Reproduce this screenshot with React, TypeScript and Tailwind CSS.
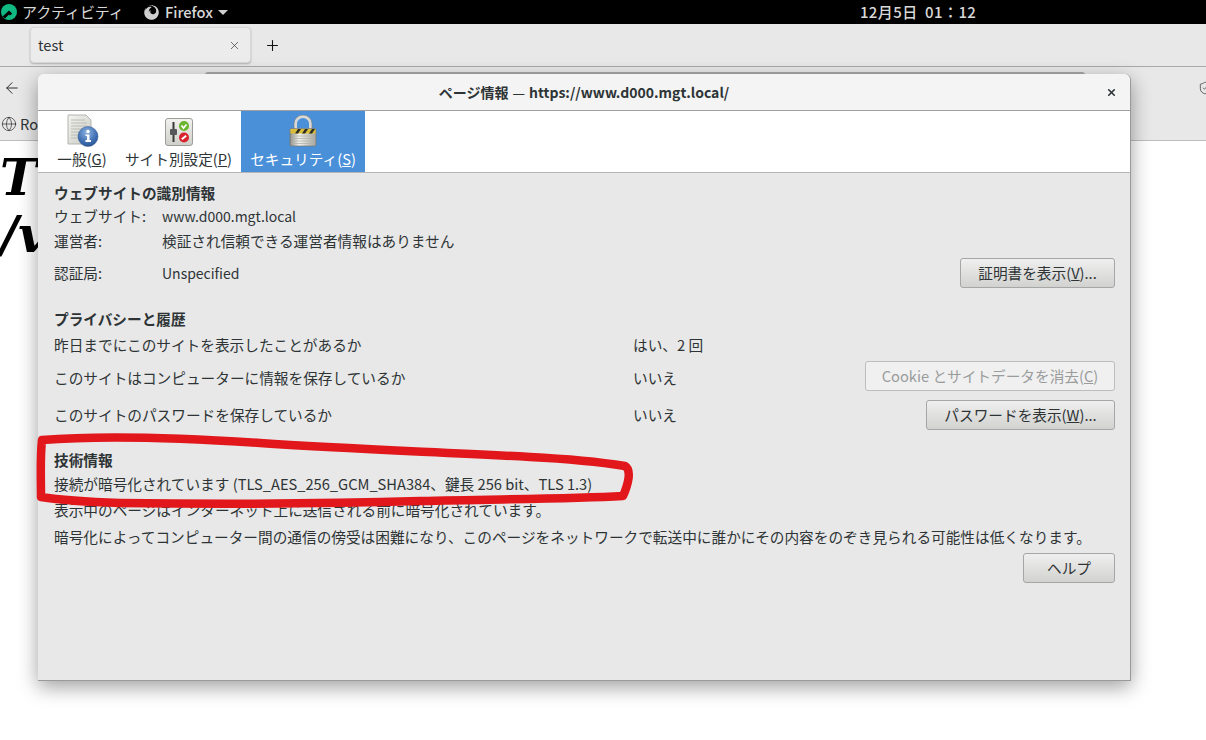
import { ReactNode } from "react";
import { ArrowLeft, Globe, Plus, ShieldCheck, X } from "lucide-react";
import { FaFirefox } from "react-icons/fa";

function RockyLogo() {
  return (
    <svg width="16" height="16" viewBox="0 0 16 16">
      <circle cx="8" cy="8" r="8" fill="#10b981" />
      <path d="M1.5 12.5 8 6.5l3.2 3-2.2 2L8 10.6 4 14.5z" fill="#000" />
    </svg>
  );
}

function InfoIcon() {
  return (
    <svg width="42" height="34" viewBox="0 0 42 34">
      <defs>
        <linearGradient id="page" x1="0" y1="0" x2="1" y2="1">
          <stop offset="0" stopColor="#f4f4f0" />
          <stop offset="1" stopColor="#c9c9c4" />
        </linearGradient>
        <radialGradient id="ball" cx="0.45" cy="0.3" r="0.8">
          <stop offset="0" stopColor="#8fb3e0" />
          <stop offset="0.6" stopColor="#3f6fb3" />
          <stop offset="1" stopColor="#234a86" />
        </radialGradient>
      </defs>
      <path d="M7 2h18l5 5v24H7z" fill="url(#page)" stroke="#b5b5b0" />
      <path d="M10 7h14M10 10h16M10 13h16M10 16h16M10 19h14M10 22h12M10 25h12" stroke="#bcbcb6" strokeWidth="1" />
      <circle cx="27" cy="23.500" r="10" fill="url(#ball)" stroke="#2c5592" strokeWidth="0.5" />
      <circle cx="27" cy="18.500" r="1.700" fill="#fff" />
      <path d="M24.500 21.500H28.500V27H30V29H24.500V27H26V23H24.500z" fill="#fff" />
    </svg>
  );
}

function SiteIcon() {
  return (
    <svg width="30" height="30" viewBox="0 0 30 30">
      <defs>
        <linearGradient id="panel" x1="0" y1="0" x2="0" y2="1">
          <stop offset="0" stopColor="#f2f2ee" />
          <stop offset="1" stopColor="#cfcfca" />
        </linearGradient>
      </defs>
      <rect x="1.500" y="1.500" width="27" height="27" rx="2.500" fill="url(#panel)" stroke="#9c9c98" />
      <rect x="8.500" y="5" width="2" height="20" fill="#3a3a3a" />
      <rect x="6" y="12" width="7" height="6" rx="1" fill="#55575a" />
      <circle cx="20" cy="9" r="5" fill="#69b52c" />
      <path d="M17.500 8.500 19.500 11l3-3.500" fill="none" stroke="#fff" strokeWidth="1.800" />
      <circle cx="20" cy="20.500" r="5" fill="#d9232e" />
      <path d="M17.800 22.300 22.200 18.700" stroke="#fff" strokeWidth="2" />
    </svg>
  );
}

function LockIcon() {
  return (
    <svg width="28" height="32" viewBox="0 0 28 32">
      <defs>
        <linearGradient id="body" x1="0" y1="0" x2="1" y2="0">
          <stop offset="0" stopColor="#8a8a84" />
          <stop offset="0.35" stopColor="#f2f2ec" />
          <stop offset="1" stopColor="#a4a49e" />
        </linearGradient>
      </defs>
      <path d="M6.500 14V8.500a7.500 7 0 0 1 15 0V14" fill="none" stroke="#d8d8d4" strokeWidth="3" />
      <path d="M5 14V8.500a9 8.500 0 0 1 18 0V14" fill="none" stroke="#77797a" strokeWidth="0.6" />
      <rect x="1" y="13.500" width="26" height="17.500" rx="1.500" fill="url(#body)" stroke="#77776f" strokeWidth="0.7" />
      <rect x="1.500" y="14" width="25" height="4.500" fill="#d7bd3a" />
      <path d="M6 18.500 9 14h3l-3 4.500zM13 18.500 16 14h3l-3 4.500zM20 18.500 23 14h3l-3 4.500z" fill="#2c2c28" />
      <path d="M2 21h24M2 23.500h24M2 26h24M2 28.500h24" stroke="#b2b2ac" strokeWidth="0.8" />
    </svg>
  );
}

function DialogTab({ icon, active, className, children }: { icon: ReactNode; active?: boolean; className: string; children: ReactNode }) {
  return (
    <div className={`flex h-full flex-col items-center ${active ? "bg-[#4a90d9] text-white" : ""} ${className}`}>
      <div className="flex h-[36px] items-end">{icon}</div>
      <div className="mt-[2px] leading-[20px] whitespace-nowrap">{children}</div>
    </div>
  );
}

function DlgButton({ className, disabled, children }: { className: string; disabled?: boolean; children: ReactNode }) {
  return (
    <button
      className={`h-[30px] rounded-[3px] border text-center ${
        disabled
          ? "border-[#bdbdbd] bg-[#f0f0f0] text-[#9a9c9c]"
          : "border-[#a6a6a6] bg-linear-to-b from-[#efefef] to-[#d2d2d0] text-[#2e3436]"
      } ${className}`}
    >
      {children}
    </button>
  );
}

function Heading({ className, children }: { className: string; children: ReactNode }) {
  return <div className={`h-[22px] leading-[22px] font-semibold ${className}`}>{children}</div>;
}

function Row({ label, labelWidth, className, children }: { label: string; labelWidth: string; className: string; children: ReactNode }) {
  return (
    <div className={`flex items-center ${className}`}>
      <div className={`shrink-0 ${labelWidth}`}>{label}</div>
      {children}
    </div>
  );
}

export default function App() {
  return (
    <div className="relative h-[740px] w-[1206px] overflow-hidden bg-white font-['Noto_Sans_CJK_JP','Noto_Sans',sans-serif] text-[14.67px] text-[#2e3436]">
      {/* GNOME top bar */}
      <div className="flex h-[24px] items-center bg-black text-[#d8d8d8]">
        <div className="ml-[1px]">
          <RockyLogo />
        </div>
        <span className="ml-[5px] w-[122px] text-[15px] tracking-[-0.1px]">アクティビティ</span>
        <FaFirefox className="text-[15px] text-[#d0d0d0]" />
        <span className="ml-[6px] font-medium">Firefox</span>
        <span className="mt-[1px] ml-[5px] h-0 w-0 border-x-[5px] border-t-[5px] border-x-transparent border-t-[#d0d0d0]" />
        <span className="ml-[632px] text-[15px] font-medium tracking-[0.4px] whitespace-pre">12月5日  01：12</span>
      </div>

      {/* tab strip */}
      <div className="flex h-[43px] items-center border-b border-[#a9a9a9] bg-[#e8e8e8] pl-[30px]">
        <div className="flex h-[36px] w-[221px] items-center justify-between rounded-[4px] border border-[#d8d8d8] bg-[#ececec] pr-[9px] pl-[7px] shadow-[0_1px_2px_rgba(0,0,0,0.25)]">
          <span>test</span>
          <X size={13} strokeWidth={1.25} className="text-[#333]" />
        </div>
        <Plus size={17} strokeWidth={1.5} className="ml-[13px] text-[#111]" />
      </div>

      {/* nav bar */}
      <div className="flex h-[41px] items-center justify-between bg-[#e8e8e8] pl-[3px]">
        <ArrowLeft size={18} strokeWidth={1.25} className="text-[#222]" />
        <ShieldCheck size={14} strokeWidth={1.25} className="mr-[-6px] text-[#333]" />
      </div>

      {/* bookmarks bar */}
      <div className="flex h-[33px] items-center border-b border-[#bdbdbd] bg-[#e8e8e8] pl-[1px]">
        <Globe size={16} strokeWidth={1} className="text-[#222]" />
        <span className="ml-[3px]">Rocky</span>
      </div>

      {/* page behind the dialog */}
      <div className="pt-[8px] font-['DejaVu_Serif',serif] text-[50px] leading-[57px] font-bold text-black italic">
        <div>Th</div>
        <div>/v</div>
      </div>

      {/* url bar edge peeking out above the dialog */}
      <div className="absolute top-[72px] left-[205px] h-[4px] w-[880px] rounded-t-[3px] bg-[#a8a8a8]" />

      {/* page info dialog */}
      <div className="absolute top-[74px] left-[38px] flex h-[607px] w-[1093px] flex-col rounded-t-[6px] border-r border-b border-[#9a9a9a] bg-[#e8e8e8] shadow-[0_6px_20px_rgba(0,0,0,0.38)]">
        <div className="relative flex h-[37px] shrink-0 items-center justify-center rounded-t-[6px] border-b border-[#9f9f9f] bg-[#f4f4f4] text-[14px] font-semibold">
          ページ情報 <span className="mx-[4px] font-normal">—</span> https://www.d000.mgt.local/
          <X size={11} strokeWidth={3.5} className="absolute top-[13px] right-[13px] text-[#2e3436]" />
        </div>
        <div className="flex h-[62px] shrink-0 border-b border-[#b5b5b5] bg-white pl-[10px]">
          <DialogTab icon={<InfoIcon />} className="w-[68px]">
            一般(<span className="underline">G</span>)
          </DialogTab>
          <DialogTab icon={<SiteIcon />} className="w-[125px]">
            サイト別設定(<span className="underline">P</span>)
          </DialogTab>
          <DialogTab icon={<LockIcon />} active className="w-[124px]">
            セキュリティ(<span className="underline">S</span>)
          </DialogTab>
        </div>

        <div className="flex flex-col pt-[9px] pr-[15px] pl-[16px]">
          <Heading className="">ウェブサイトの識別情報</Heading>
          <Row label="ウェブサイト:" labelWidth="w-[108px]" className="h-[24px]">
            <span className="text-[14px]">www.d000.mgt.local</span>
          </Row>
          <Row label="運営者:" labelWidth="w-[108px]" className="h-[25px]">
            <span>検証され信頼できる運営者情報はありません</span>
          </Row>
          <Row label="認証局:" labelWidth="w-[108px]" className="h-[40px] justify-between">
            <span className="flex-1 text-[14px]">Unspecified</span>
            <DlgButton className="w-[155px]">
              証明書を表示(<span className="underline">V</span>)...
            </DlgButton>
          </Row>

          <Heading className="mt-[15px]">プライバシーと履歴</Heading>
          <Row label="昨日までにこのサイトを表示したことがあるか" labelWidth="w-[579px]" className="h-[30px]">
            <span>はい、2 回</span>
          </Row>
          <Row label="このサイトはコンピューターに情報を保存しているか" labelWidth="w-[579px]" className="h-[36px]">
            <span className="flex-1">いいえ</span>
            <DlgButton disabled className="mb-[5px] w-[250px]">
              Cookie とサイトデータを消去(<span className="underline">C</span>)
            </DlgButton>
          </Row>
          <Row label="このサイトのパスワードを保存しているか" labelWidth="w-[579px]" className="h-[38px]">
            <span className="flex-1">いいえ</span>
            <DlgButton className="w-[189px]">
              パスワードを表示(<span className="underline">W</span>)...
            </DlgButton>
          </Row>

          <Heading className="mt-[15px]">技術情報</Heading>
          <div className="mt-[1px] h-[24px] leading-[24px]">接続が暗号化されています (TLS_AES_256_GCM_SHA384、鍵長 256 bit、TLS 1.3)</div>
          <div className="mt-[1px] h-[26px] leading-[26px]">表示中のページはインターネット上に送信される前に暗号化されています。</div>
          <div className="h-[28px] leading-[28px] whitespace-nowrap">
            暗号化によってコンピューター間の通信の傍受は困難になり、このページをネットワークで転送中に誰かにその内容をのぞき見られる可能性は低くなります。
          </div>
          <div className="mt-[2px] flex justify-end">
            <DlgButton className="w-[92px]">ヘルプ</DlgButton>
          </div>
        </div>
      </div>

      {/* red marker annotation */}
      <svg className="absolute top-0 left-0" width="1206" height="740" viewBox="0 0 1206 740" fill="none">
        <path
          d="M42 440C90 436 170 437 260 443C350 449 440 452 530 457C570 459 600 462 625 466C632 470 628 485 623 496C570 499 500 499 420 501C320 504 200 504 120 503C90 502 60 500 41 497C41 478 40 458 42 440Z"
          stroke="#e2171b"
          strokeWidth="8.500"
          strokeLinejoin="round"
        />
      </svg>
    </div>
  );
}
